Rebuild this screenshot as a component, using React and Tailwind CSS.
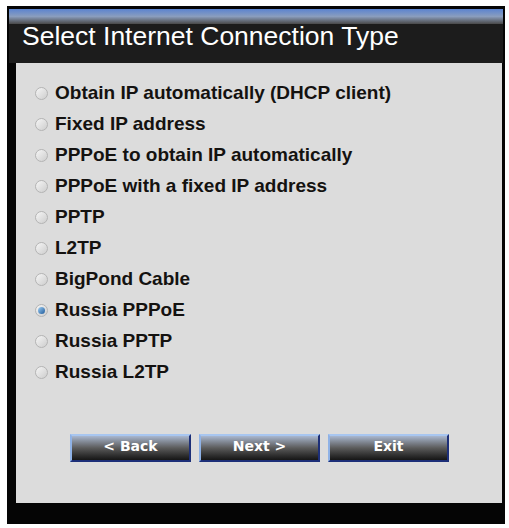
import React, { useState } from "react";

const options = [
  "Obtain IP automatically (DHCP client)",
  "Fixed IP address",
  "PPPoE to obtain IP automatically",
  "PPPoE with a fixed IP address",
  "PPTP",
  "L2TP",
  "BigPond Cable",
  "Russia PPPoE",
  "Russia PPTP",
  "Russia L2TP",
];

const Radio = ({ checked }) => (
  <span className="flex h-[13px] w-[13px] shrink-0 items-center justify-center rounded-full border border-[#b4b4b4] bg-gradient-to-br from-[#f6f6f6] to-[#cdcdcd]">
    {checked && (
      <span className="h-[7px] w-[7px] rounded-full bg-gradient-to-br from-[#9fd0f4] to-[#1c5a9a]" />
    )}
  </span>
);

const NavButton = ({ children }) => (
  <button
    type="button"
    className="flex h-[28px] w-[121px] items-center justify-center border-t-2 border-l-2 border-r-2 border-b-2 border-t-[#a8c6f0] border-l-[#8fb2e6] border-r-[#1d2f78] border-b-[#1d2f78] bg-gradient-to-b from-[#a9b7cf] via-[#5b5b5b] to-[#161616] pb-[3px] text-[14px] font-bold text-white"
    style={{ fontFamily: '"DejaVu Sans", Verdana, sans-serif' }}
  >
    {children}
  </button>
);

export default function App() {
  const [selected, setSelected] = useState(7);

  return (
    <div className="min-h-screen bg-white pt-[6px] pl-[7px]">
      <div className="flex h-[518px] w-[498px] flex-col bg-[#050505] pt-[3px] pr-[2px] pl-[2px]">
        <div className="h-[15px] bg-gradient-to-b from-[#5b83cf] via-[#8a9dbd] to-[#4a4a4a]" />
        <div
          className="h-[39px] bg-[#1c1c1c] pl-[13px] text-[26.5px] leading-[22px] text-white"
          style={{ fontFamily: '"Liberation Sans", Arial, sans-serif' }}
        >
          <span className="block pt-[1px]">Select Internet Connection Type</span>
        </div>
        <div className="ml-[7px] mr-[1px] flex h-[440px] flex-col bg-[#dcdcdc] pt-[15px]">
          <ul
            className="flex flex-col pl-[19px]"
            style={{ fontFamily: '"Liberation Sans", Arial, sans-serif' }}
          >
            {options.map((o, i) => (
              <li
                key={o}
                onClick={() => setSelected(i)}
                className="flex h-[31px] cursor-pointer items-center gap-[7px] text-[19px] font-bold text-[#141210]"
              >
                <Radio checked={selected === i} />
                <span>{o}</span>
              </li>
            ))}
          </ul>
          <div className="mt-[46px] flex gap-[8px] pl-[54px]">
            <NavButton>&lt; Back</NavButton>
            <NavButton>Next &gt;</NavButton>
            <NavButton>Exit</NavButton>
          </div>
        </div>
      </div>
    </div>
  );
}
